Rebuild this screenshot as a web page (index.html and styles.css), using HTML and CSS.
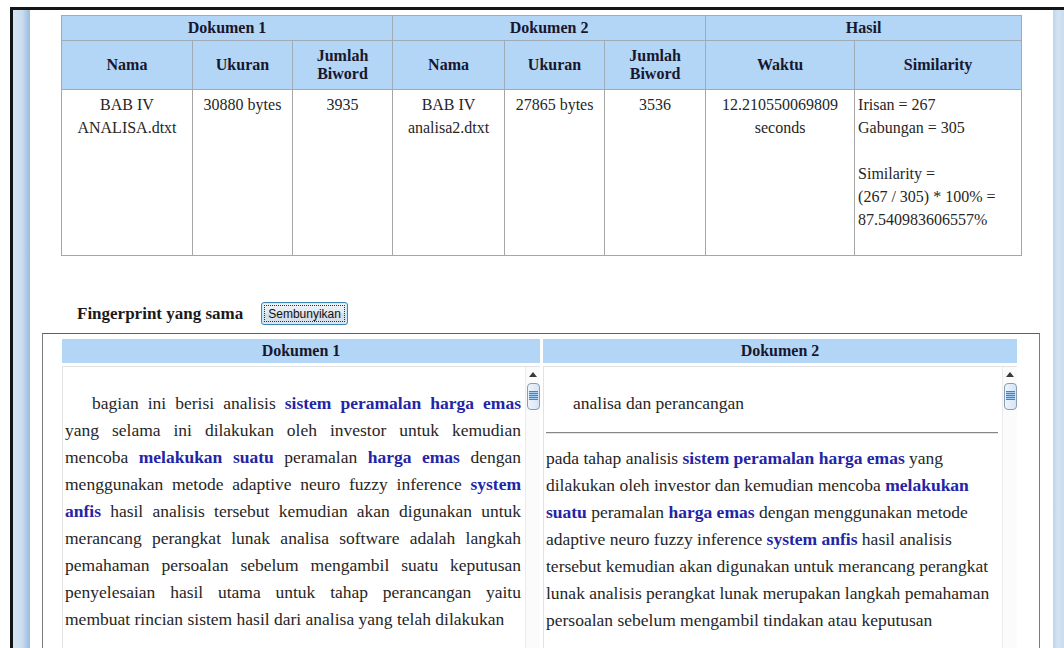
FILE: index.html
```html
<!DOCTYPE html>
<html lang="id">
<head>
<meta charset="utf-8">
<title>Hasil Perbandingan Dokumen</title>
<link rel="stylesheet" href="styles.css">
</head>
<body>
<div class="window">
  <div class="frame-edge left"></div>

  <main class="page">
    <table class="summary">
      <colgroup>
        <col style="width:131px"><col style="width:100px"><col style="width:100px">
        <col style="width:112px"><col style="width:100px"><col style="width:101px">
        <col style="width:149px"><col style="width:167px">
      </colgroup>
      <thead>
        <tr class="group">
          <th colspan="3">Dokumen 1</th>
          <th colspan="3">Dokumen 2</th>
          <th colspan="2">Hasil</th>
        </tr>
        <tr class="sub">
          <th>Nama</th><th>Ukuran</th><th>Jumlah Biword</th>
          <th>Nama</th><th>Ukuran</th><th>Jumlah Biword</th>
          <th>Waktu</th><th>Similarity</th>
        </tr>
      </thead>
      <tbody>
        <tr>
          <td>BAB IV ANALISA.dtxt</td>
          <td>30880 bytes</td>
          <td>3935</td>
          <td>BAB IV analisa2.dtxt</td>
          <td>27865 bytes</td>
          <td>3536</td>
          <td>12.210550069809 seconds</td>
          <td class="result">Irisan = 267<br>Gabungan = 305<br><br>Similarity =<br>(267 / 305) * 100% = 87.540983606557%</td>
        </tr>
      </tbody>
    </table>

    <div class="fp-bar">
      <span class="fp-title">Fingerprint yang sama</span>
      <button class="toggle" type="button"><span class="toggle-label">Sembunyikan</span></button>
    </div>

    <section class="compare">
      <table class="compare-table">
        <colgroup><col style="width:478px"><col></colgroup>
        <thead>
          <tr><th>Dokumen 1</th><th>Dokumen 2</th></tr>
        </thead>
        <tbody>
          <tr>
            <td>
              <div class="doc">
                <div class="doc-text justified">
                  <p class="lead">bagian ini berisi analisis <b>sistem peramalan harga emas</b> yang selama ini dilakukan oleh investor untuk kemudian mencoba <b>melakukan suatu</b> peramalan <b>harga emas</b> dengan menggunakan metode adaptive neuro fuzzy inference <b>system anfis</b> hasil analisis tersebut kemudian akan digunakan untuk merancang perangkat lunak analisa software adalah langkah pemahaman persoalan sebelum mengambil suatu keputusan penyelesaian hasil utama untuk tahap perancangan yaitu membuat rincian sistem hasil dari analisa yang telah dilakukan</p>
                </div>
                <div class="scrollbar"><span class="sb-arrow"></span><span class="sb-thumb"><span class="sb-grip"></span></span></div>
              </div>
            </td>
            <td>
              <div class="doc">
                <div class="doc-text">
                  <p class="lead">analisa dan perancangan</p>
                  <hr class="rule">
                  <p>pada tahap analisis <b>sistem peramalan harga emas</b> yang dilakukan oleh investor dan kemudian mencoba <b>melakukan suatu</b> peramalan <b>harga emas</b> dengan menggunakan metode adaptive neuro fuzzy inference <b>system anfis</b> hasil analisis tersebut kemudian akan digunakan untuk merancang perangkat lunak analisis perangkat lunak merupakan langkah pemahaman persoalan sebelum mengambil tindakan atau keputusan</p>
                </div>
                <div class="scrollbar"><span class="sb-arrow"></span><span class="sb-thumb"><span class="sb-grip"></span></span></div>
              </div>
            </td>
          </tr>
        </tbody>
      </table>
    </section>
  </main>

  <div class="frame-edge right"></div>
</div>
</body>
</html>
```

FILE: styles.css
```css
html, body {
  margin: 0;
  height: 100%;
  overflow: hidden;
  background: #fff;
}

body {
  font-family: "Liberation Serif", "Times New Roman", serif;
  color: #222;
}

/* window frame: dark edge on top/left, pale blue side rails */
.window {
  box-sizing: border-box;
  height: calc(100% - 7px);
  margin: 7px 0 0 10px;
  border-top: 3px solid #151515;
  border-left: 3px solid #151515;
  display: flex;
  overflow: hidden;
}

.frame-edge { flex: none; }

.frame-edge.left {
  width: 17px;
  background: linear-gradient(to right, #d6e5f3 0%, #cadcef 55%, #a9c7e5 82%, #9cbde0 100%);
}

.frame-edge.right {
  width: 11px;
  background: linear-gradient(to right, #bdd5ed 0%, #d3e3f3 45%, #cadcef 100%);
}

.page {
  flex: 1;
  min-width: 0;
  padding: 5px 0 0 12px;
}

/* summary table */
.summary {
  margin-left: 19px;
  width: 960px;
  table-layout: fixed;
  border-collapse: collapse;
  font-size: 16px;
}

.summary th {
  background: #b3d5f6;
  color: #17172e;
  font-weight: bold;
  border: 1px solid #9fabb7;
  padding: 3px 4px;
  line-height: 18px;
}

.summary .sub th {
  padding: 6px 4px;
}

.summary td {
  border: 1px solid #a6a6a6;
  vertical-align: top;
  text-align: center;
  padding: 3px 4px 24px;
  line-height: 23px;
  color: #262626;
}

.summary td.result {
  text-align: left;
  padding-left: 3px;
}

/* fingerprint toggle row */
.fp-bar {
  display: flex;
  align-items: center;
  gap: 18px;
  margin: 46px 0 0 35px;
  height: 23px;
}

.fp-title {
  font-size: 17px;
  font-weight: bold;
  color: #1a1a1a;
}

.toggle {
  box-sizing: border-box;
  height: 23px;
  padding: 2px;
  border: 1px solid #3f86b4;
  border-radius: 3px;
  background: linear-gradient(#eef4f8 0%, #e2eaf0 48%, #d3dde5 52%, #dce5ec 100%);
  box-shadow: inset 0 0 0 1px #c9eaf9;
  font-family: "Liberation Sans", Arial, sans-serif;
  font-size: 12px;
  color: #111;
}

.toggle-label {
  display: block;
  height: 17px;
  line-height: 16px;
  padding: 0 3px;
  border: 1px dotted #333;
  box-sizing: border-box;
}

/* side-by-side document view */
.compare {
  box-sizing: border-box;
  width: 998px;
  height: 400px;
  margin-top: 8px;
  padding-top: 2px;
  border: 1px solid #7c7c7c;
  border-top-color: #5f5f5f;
}

.compare-table {
  width: 961px;
  margin-left: 16px;
  table-layout: fixed;
  border-spacing: 3px;
  font-size: 16px;
}

.compare-table th {
  background: #b3d5f6;
  color: #17172e;
  font-weight: bold;
  padding: 3px;
  line-height: 18px;
}

.compare-table td {
  padding: 0;
  vertical-align: top;
}

.doc {
  display: flex;
  height: 300px;
  border: 1px solid #e2e2e2;
  border-right: none;
}

.doc-text {
  flex: 1;
  min-width: 0;
  overflow: hidden;
  padding: 23px 4px 0 2px;
  font-size: 17.5px;
  line-height: 27px;
  color: #262626;
}

.doc-text p {
  margin: 0;
}

.doc-text.justified {
  text-align: justify;
}

.doc-text .lead {
  text-indent: 27px;
}

.doc-text b {
  color: #2424a6;
}

.rule {
  margin: 15px 0 11px;
  border: none;
  border-top: 1px solid #858585;
  border-bottom: 1px solid #e4e4e4;
}

/* scrollbar strip */
.scrollbar {
  flex: none;
  width: 14px;
  background: #fbfbfb;
  border-left: 1px solid #ebebeb;
  display: flex;
  flex-direction: column;
  align-items: center;
}

.sb-arrow {
  width: 0;
  height: 0;
  margin-top: 5px;
  border-left: 4px solid transparent;
  border-right: 4px solid transparent;
  border-bottom: 5px solid #3a3a3a;
}

.sb-thumb {
  box-sizing: border-box;
  width: 13px;
  height: 27px;
  margin-top: 6px;
  border: 1px solid #8a9cb1;
  border-radius: 4px;
  background: linear-gradient(to right, #eef4fa, #d5e5f5);
  display: flex;
  justify-content: center;
  padding-top: 7px;
}

.sb-grip {
  width: 9px;
  height: 9px;
  background: repeating-linear-gradient(#3f86d2 0 1px, #a9cdf0 1px 2px);
}
```
